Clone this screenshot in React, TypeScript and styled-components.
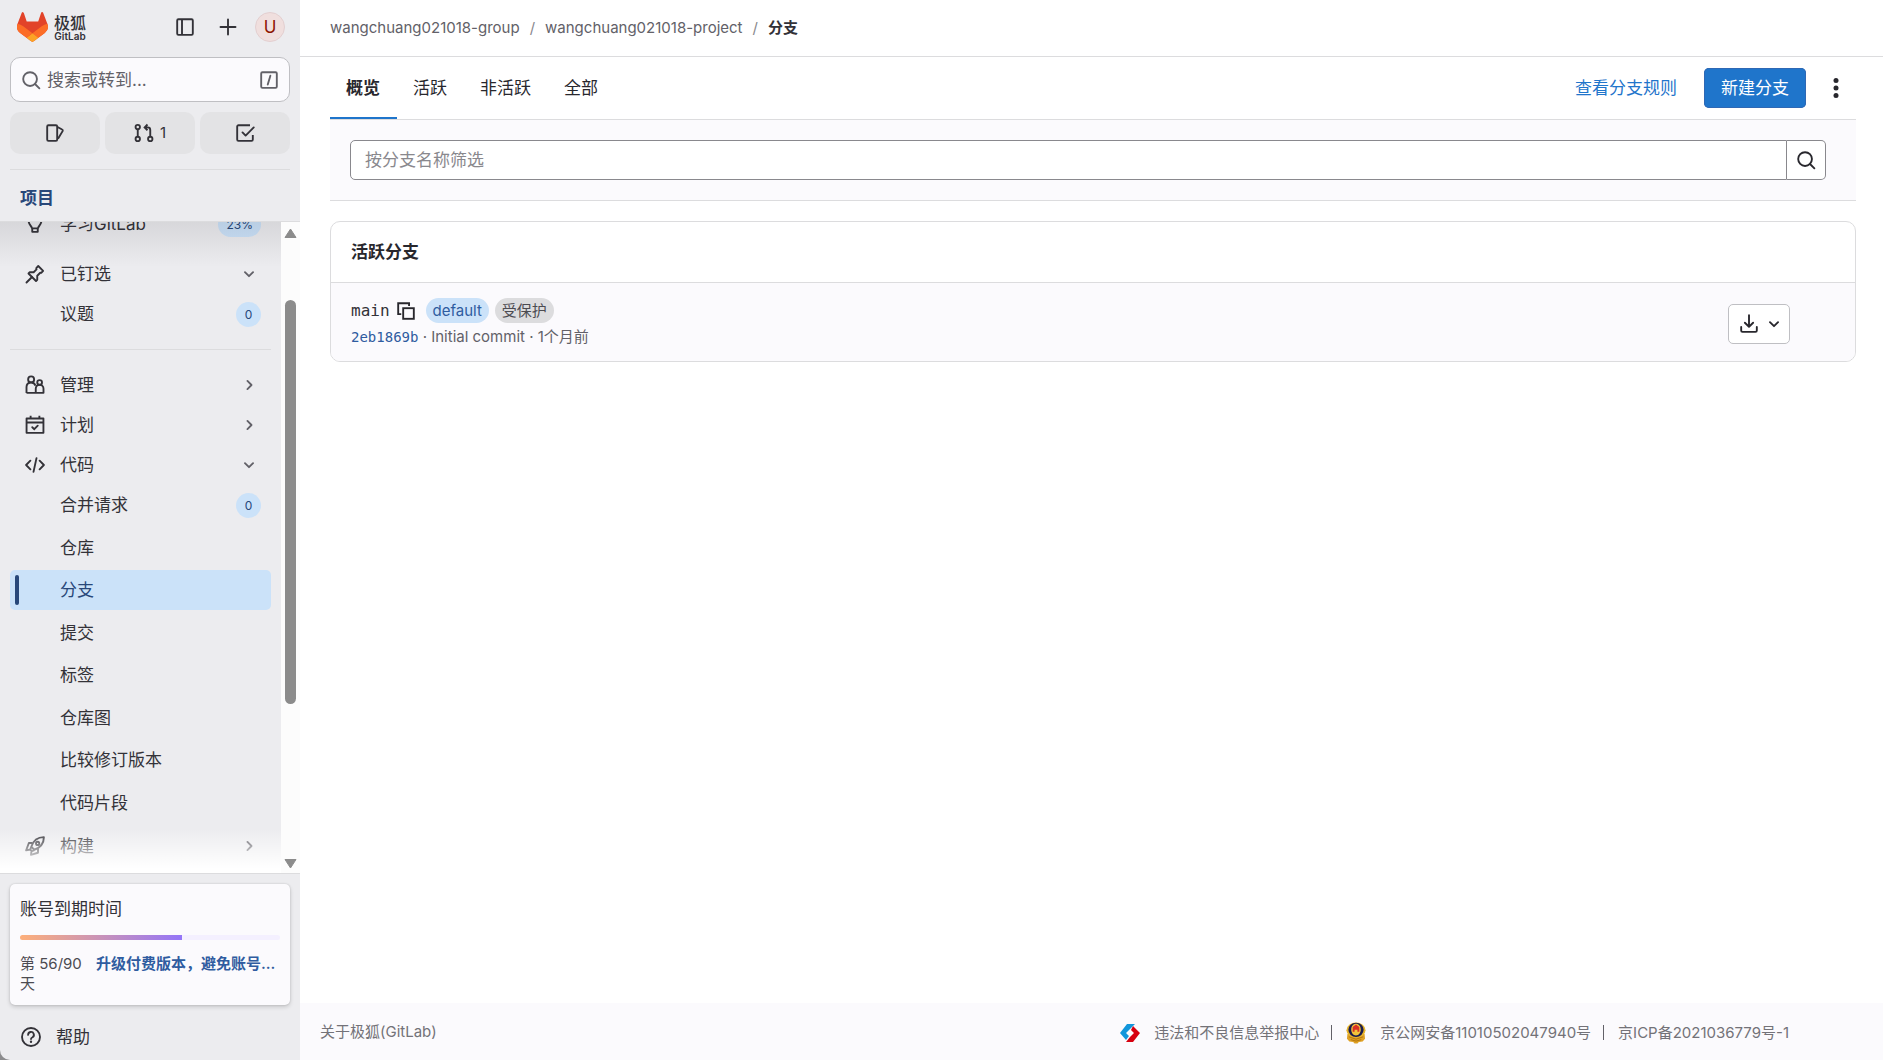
import React from "react";
import styled, { createGlobalStyle, css } from "styled-components";

const GlobalStyle = createGlobalStyle`
  *, *::before, *::after { box-sizing: border-box; }
  body {
    margin: 0;
    background: #8c8c8e;
    color: #28272d;
    font-family: Inter, "Noto Sans CJK SC", sans-serif;
    font-size: 17px;
    line-height: 24px;
  }
  a { color: inherit; text-decoration: none; }
  button, input { font: inherit; color: inherit; }
  button { padding: 0; border: 0; background: none; cursor: pointer; }
  ul, ol { margin: 0; padding: 0; list-style: none; }
  h1, h2, p { margin: 0; font-size: inherit; }
`;

/* ---------- icons ---------- */

const Glyph = styled.svg`
  width: 20px;
  height: 20px;
  flex: none;
  display: block;
  fill: none;
  stroke: currentColor;
  stroke-width: 1.5;
`;

const shapes: Record<string, React.ReactNode> = {
  sidebar: (
    <>
      <rect x="1.75" y="1.75" width="12.5" height="12.5" rx="1" />
      <path d="M5.6 2v12" />
    </>
  ),
  plus: <path d="M8 2v12M2 8h12" strokeLinecap="round" />,
  search: (
    <>
      <circle cx="7.25" cy="7.25" r="5.5" />
      <path d="M11.2 11.2l3.5 3.5" strokeLinecap="round" />
    </>
  ),
  slash: (
    <>
      <rect x="1.75" y="1.75" width="12.5" height="12.5" rx="1" />
      <path d="M9.1 4.6L7 11.6" strokeLinecap="round" />
    </>
  ),
  issues: (
    <>
      <rect x="1.75" y="1.75" width="8" height="12.5" rx="1" />
      <path d="M10 3.2l3.7 2a.9.9 0 0 1 .5 1.1L10.4 12.6" strokeLinejoin="round" />
    </>
  ),
  merge: (
    <>
      <circle cx="3" cy="3.25" r="1.75" />
      <circle cx="3" cy="12.75" r="1.75" />
      <circle cx="13" cy="12.75" r="1.75" />
      <path d="M3 5v6M13 11V5.5a2 2 0 0 0-2-2H8.8M10.8 1.2L8.5 3.5l2.3 2.3" />
    </>
  ),
  todo: (
    <>
      <path d="M12 1.75H2.75a1 1 0 0 0-1 1v10.5a1 1 0 0 0 1 1h10.5a1 1 0 0 0 1-1V9.5" />
      <path d="M6 7.5l2.5 2.6 6.5-6.6" strokeLinecap="round" strokeLinejoin="round" />
    </>
  ),
  bulb: (
    <>
      <path d="M5.7 11.5C5.3 9.5 2.9 8.4 2.9 5.6a5.1 5.1 0 0 1 10.2 0c0 2.8-2.4 3.9-2.8 5.9z" strokeLinejoin="round" />
      <path d="M5.8 11.5v2.75h4.4V11.5" strokeLinejoin="round" />
    </>
  ),
  pin: (
    <>
      <path d="M10.6 1.6l3.9 3.9-1.5 1.6-.8-.1-2.4 2.4v3.2l-1 1-6-6 1-1h3.1l2.3-2.3-.2-1z" strokeLinejoin="round" />
      <path d="M5.6 10.4L1.2 14.8" strokeLinecap="round" />
    </>
  ),
  users: (
    <>
      <circle cx="4.9" cy="3.5" r="2.4" />
      <path d="M1.2 14.3V9.6a3.7 3.7 0 0 1 7.2-1.100M1.200 14.250H8.600V10.900a3.100 3.100 0 0 1 6.200 0v3.350H8.600" strokeLinejoin="round" />
      <circle cx="11.700" cy="6" r="1.900" />
    </>
  ),
  calendar: (
    <>
      <path d="M1.25 2.75h13.5v11.5H1.25zM1.25 6h13.5M4.5 0.5v2.2M11.5 0.5v2.2" strokeLinejoin="round" />
      <path d="M5.8 9.8l1.6 1.5 2.8-2.8" strokeLinecap="round" />
    </>
  ),
  code: <path d="M4.3 4.5L.9 8l3.4 3.5M11.7 4.5L15.1 8l-3.4 3.5M9.2 2.5L6.8 13.5" strokeLinecap="round" strokeLinejoin="round" />,
  rocket: (
    <>
      <path d="M5 8.6C6.4 4.4 9.6 .9 15.1 .9c0 5.3-3.5 8.6-7.7 10.1z" strokeLinejoin="round" />
      <circle cx="10.1" cy="5.9" r="1.3" />
      <path d="M6 5.6H3.1L.9 11.5l3.5-.7M10.4 10v3.4l-5.6 1.7 .4-3.5M4.8 9l-.6 2 1.3 1.2 2-.8" strokeLinejoin="round" />
    </>
  ),
  question: (
    <>
      <circle cx="8" cy="8" r="7.2" />
      <path d="M5.7 6.3a2.3 2.3 0 1 1 3.5 1.9C8.4 8.6 8 8.9 8 9.6" strokeLinecap="round" />
      <circle cx="8" cy="11.8" r=".95" fill="currentColor" stroke="none" />
    </>
  ),
  copy: (
    <>
      <path d="M4.2 10.5H1.75V1.75h8.7V4" />
      <rect x="5.75" y="5.75" width="8.5" height="8.5" />
    </>
  ),
  download: (
    <>
      <path d="M8 1v9M4.7 7L8 10.2 11.3 7" strokeLinecap="round" strokeLinejoin="round" />
      <path d="M1.75 10.3v2.95a1 1 0 0 0 1 1h10.5a1 1 0 0 0 1-1V10.3" strokeLinecap="round" />
    </>
  ),
  more: (
    <g fill="currentColor" stroke="none">
      <circle cx="8" cy="2" r="2" />
      <circle cx="8" cy="8" r="2" />
      <circle cx="8" cy="14" r="2" />
    </g>
  ),
  down: <path d="M4.75 6.5L8 9.75l3.25-3.25" strokeLinecap="round" strokeLinejoin="round" />,
  right: <path d="M6.75 4.75L10 8l-3.25 3.25" strokeLinecap="round" strokeLinejoin="round" />,
};

function Icon({ name }: { name: string }) {
  return (
    <Glyph viewBox="0 0 16 16" aria-hidden="true">
      {shapes[name]}
    </Glyph>
  );
}

const Tanuki = () => (
  <svg width="31" height="30" viewBox="0 0 25 24" aria-hidden="true">
    <path d="m24.507 9.5-.034-.09L21.082.562a.896.896 0 0 0-1.694.091l-2.29 7.01H7.825L5.535.653a.898.898 0 0 0-1.694-.09L.451 9.411.416 9.5a6.297 6.297 0 0 0 2.09 7.278l.012.01.03.022 5.16 3.867 2.56 1.935 1.554 1.176a1.051 1.051 0 0 0 1.268 0l1.555-1.176 2.56-1.935 5.197-3.89.014-.01A6.297 6.297 0 0 0 24.507 9.5Z" fill="#E24329" />
    <path d="m24.507 9.5-.034-.09a11.44 11.44 0 0 0-4.56 2.051l-7.447 5.632 4.742 3.584 5.197-3.89.014-.01A6.297 6.297 0 0 0 24.507 9.5Z" fill="#FC6D26" />
    <path d="m7.707 20.677 2.56 1.935 1.555 1.176a1.051 1.051 0 0 0 1.268 0l1.555-1.176 2.56-1.935-4.743-3.584-4.755 3.584Z" fill="#FCA326" />
    <path d="M5.01 11.461a11.43 11.43 0 0 0-4.56-2.05L.416 9.5a6.297 6.297 0 0 0 2.09 7.278l.012.01.03.022 5.16 3.867 4.745-3.584-7.444-5.632Z" fill="#FC6D26" />
  </svg>
);

const ReportMark = () => (
  <svg width="20" height="18" viewBox="0 0 20 18" aria-hidden="true">
    <path d="M7 0h8l-4 4-5 5 3 3-3 4L0 9z" fill="#1296db" />
    <path d="M13 2l7 7-7 9H6l4-5 4-4-3-3z" fill="#d7000f" />
  </svg>
);

const PoliceMark = () => (
  <svg width="20" height="22" viewBox="0 0 21 22" aria-hidden="true">
    <path d="M1.500 12h18l.5 5-2.500 3-4 .5-1.500 1.500h-3l-1.500-1.500-4-.5L1 17z" fill="#dfa126" />
    <ellipse cx="10.5" cy="8" rx="10" ry="8" fill="#e8b52c" />
    <ellipse cx="10.5" cy="7.7" rx="8" ry="7.5" fill="#1b1c4e" />
    <path d="M10.5 1.200c3 0 5 2.500 5 6.300 0 3-2 6-5 6s-5-3-5-6c0-3.800 2-6.300 5-6.300z" fill="#f2c33b" />
    <path d="M10.5 2.200l3.500 2.500v5h-2V7.500H9v2.200H7v-5z" fill="#d93025" />
    <path d="M3 15l7.500 2.500L18 15M5 18l5.500 1.500L16 18" stroke="#b3740d" fill="none" />
  </svg>
);

/* ---------- sidebar ---------- */

const Shell = styled.div`
  display: flex;
  min-height: 100vh;
`;

const Sidebar = styled.aside`
  width: 300px;
  height: 100vh;
  flex: none;
  position: sticky;
  top: 0;
  display: flex;
  flex-direction: column;
  background: #ececef;
  color: #333238;
  border-bottom-left-radius: 10px;
  overflow: hidden;
`;

const SidebarTop = styled.div`
  padding: 0 10px;
  border-bottom: 1px solid #dcdcde;
`;

const BrandRow = styled.div`
  display: flex;
  align-items: center;
  height: 54px;
  padding: 0 5px 0 7px;
`;

const Brand = styled.a`
  display: flex;
  align-items: center;
  gap: 6px;
  margin-right: auto;
`;

const BrandText = styled.span`
  display: flex;
  flex-direction: column;
  align-items: center;
  padding-top: 2px;
  font-size: 16px;
  font-weight: 500;
  line-height: 16px;
`;

const BrandSub = styled.span`
  font-size: 10px;
  font-weight: 600;
  line-height: 10px;
`;

const HeadButton = styled.button`
  display: grid;
  place-items: center;
  width: 43px;
  height: 40px;
`;

const Avatar = styled.span`
  display: grid;
  place-items: center;
  width: 30px;
  height: 30px;
  border: 1px solid #e3cfd0;
  border-radius: 50%;
  background: #f0dfde;
  color: #8d1300;
`;

const AvatarButton = styled.button`
  margin-left: 6px;
  border-radius: 50%;
`;

const SearchButton = styled.button`
  display: flex;
  align-items: center;
  gap: 6px;
  width: 100%;
  height: 45px;
  margin-top: 3px;
  padding: 0 10px;
  border: 1px solid #bfbfc3;
  border-radius: 10px;
  background: #fbfafd;
  color: #626168;
  text-align: left;
`;

const Grow = styled.span`
  flex: 1;
`;

const Shortcuts = styled.div`
  display: grid;
  grid-template-columns: repeat(3, 1fr);
  gap: 5px;
  padding: 10px 0 15px;
  border-bottom: 1px solid #dcdcde;
`;

const Shortcut = styled.a`
  display: flex;
  align-items: center;
  justify-content: center;
  gap: 6px;
  height: 42px;
  border-radius: 10px;
  background: #e3e3e5;
  font-size: 15px;
`;

const SectionTitle = styled.h2`
  padding: 16px 10px 11px;
  color: #284779;
  font-weight: 600;
`;

const Scroller = styled.div`
  flex: 1;
  min-height: 0;
  display: flex;
`;

const NavPane = styled.nav`
  position: relative;
  flex: 1;
  overflow: hidden;
  padding: 0 10px;

  &::before, &::after {
    content: "";
    position: absolute;
    left: 0;
    right: 0;
    pointer-events: none;
  }
  &::before {
    top: 0;
    height: 45px;
    background: linear-gradient(rgba(31, 30, 36, 0.1), rgba(31, 30, 36, 0));
  }
  &::after {
    bottom: 0;
    height: 44px;
    background: linear-gradient(rgba(255, 255, 255, 0), #fff 90%);
  }
`;

const NavScrolled = styled.div`
  margin-top: -18px;
`;

const Group = styled.ul<{ $divided?: boolean }>`
  padding-top: ${(p) => (p.$divided ? 15 : 10)}px;
  margin-top: ${(p) => (p.$divided ? 15 : 0)}px;
  border-top: ${(p) => (p.$divided ? "1px solid #dcdcde" : "0")};
`;

const SubList = styled.ul`
  display: grid;
  align-content: space-between;
  height: 338px;
  margin-bottom: 3px;
`;

const NavLink = styled.a<{ $active?: boolean }>`
  display: flex;
  align-items: center;
  height: 40px;
  padding: 0 10px 0 5px;
  border-radius: 5px;
  ${(p) =>
    p.$active &&
    css`
      background: #cbe2f9;
      color: #284779;
    `}
`;

const Marker = styled.span<{ $active?: boolean }>`
  width: 4px;
  height: 30px;
  margin-right: 6px;
  border-radius: 2px;
  background: ${(p) => (p.$active ? "#284779" : "transparent")};
`;

const IconSlot = styled.span`
  width: 20px;
  margin-right: 15px;
`;

const Chevron = styled.span`
  padding-right: 2px;
  color: #626168;
`;

const Count = styled.span`
  min-width: 25px;
  padding: 0 8px;
  border-radius: 13px;
  background: #cbe2f9;
  color: #284779;
  font-size: 12px;
  line-height: 25px;
  text-align: center;
`;

const ScrollTrack = styled.div`
  display: flex;
  flex-direction: column;
  align-items: center;
  width: 19px;
  padding: 6px 0 4px;
  background: #fcfcfc;
`;

const ScrollThumb = styled.div`
  width: 11px;
  flex: 405;
  border-radius: 6px;
  background: #8b8b8b;
`;

const ScrollSpace = styled.div<{ $share: number }>`
  flex: ${(p) => p.$share};
`;

const SidebarBottom = styled.div`
  padding: 10px 10px 3px;
  border-top: 1px solid #dcdcde;
`;

const Trial = styled.section`
  padding: 13px 10px 11px;
  border-radius: 5px;
  background: #fbfafd;
  box-shadow: 0 0 2px rgba(5, 5, 6, 0.16), 0 2px 4px rgba(5, 5, 6, 0.16);
`;

const Meter = styled.div`
  height: 5px;
  margin: 14px 0;
  border-radius: 3px;
  background: #f4f0ff;
  overflow: hidden;
`;

const MeterFill = styled.div`
  height: 100%;
  background: linear-gradient(to right, #fdaf7a, #9475f8);
`;

const TrialRow = styled.div`
  display: flex;
  gap: 10px;
  font-size: 15px;
  line-height: 20px;
  color: #4c4b51;
`;

const TrialDays = styled.span`
  width: 66px;
`;

const TrialLink = styled.a`
  flex: 1;
  color: #2f5ca0;
  font-weight: 600;
  white-space: nowrap;
`;

const HelpButton = styled.button`
  display: flex;
  align-items: center;
  gap: 15px;
  height: 40px;
  margin-top: 12px;
  padding: 0 11px;
`;

/* ---------- main ---------- */

const Main = styled.div`
  flex: 1;
  min-width: 0;
  display: flex;
  flex-direction: column;
  background: #fff;
`;

const TopBar = styled.header`
  display: flex;
  align-items: center;
  height: 57px;
  padding: 0 30px;
  border-bottom: 1px solid #dcdcde;
`;

const Crumbs = styled.ol`
  display: flex;
  font-size: 15px;
  line-height: 20px;
  color: #626168;

  li + li::before {
    content: "/";
    margin: 0 10px;
    color: #89888d;
  }
  li:last-child a {
    color: #333238;
    font-weight: 600;
  }
`;

const Content = styled.main`
  flex: 1;
  padding: 0 27px 0 30px;
`;

const TabBar = styled.div`
  display: flex;
  align-items: center;
  height: 63px;
  border-bottom: 1px solid #dcdcde;
`;

const Tabs = styled.nav`
  display: flex;
  align-self: stretch;
  margin-right: auto;
`;

const Tab = styled.a<{ $active?: boolean }>`
  display: flex;
  align-items: center;
  padding: 2px 17px 0 16px;
  border-bottom: 2px solid ${(p) => (p.$active ? "#1f75cb" : "transparent")};
  font-weight: ${(p) => (p.$active ? 600 : 400)};
`;

const RulesLink = styled.a`
  color: #1f75cb;
  margin-right: 27px;
`;

const PrimaryButton = styled.button`
  height: 40px;
  padding: 0 17px;
  border-radius: 5px;
  background: #1f75cb;
  box-shadow: inset 0 0 0 1px #2f68b4;
  color: #fff;
`;

const MoreButton = styled.button`
  display: grid;
  place-items: center;
  width: 40px;
  height: 40px;
  margin-left: 10px;
`;

const FilterArea = styled.form`
  display: flex;
  padding: 20px 30px 20px 20px;
  border-bottom: 1px solid #dcdcde;
  background: #fbfafd;
`;

const FilterInput = styled.input`
  flex: 1;
  min-width: 0;
  height: 40px;
  padding: 0 14px;
  border: 1px solid #89888d;
  border-radius: 5px 0 0 5px;
  background: #fff;
  outline: 0;
  &::placeholder {
    color: #89888d;
    opacity: 1;
  }
`;

const FilterButton = styled.button`
  display: grid;
  place-items: center;
  width: 39px;
  height: 40px;
  border: 1px solid #89888d;
  border-left: 0;
  border-radius: 0 5px 5px 0;
  background: #fff;
`;

const Card = styled.section`
  margin-top: 20px;
  border: 1px solid #dcdcde;
  border-radius: 10px;
  overflow: hidden;
`;

const CardTitle = styled.h1`
  padding: 18px 20px;
  border-bottom: 1px solid #dcdcde;
  font-weight: 600;
`;

const BranchRow = styled.div`
  display: flex;
  align-items: center;
  justify-content: space-between;
  padding: 15px 65px 12px 20px;
  background: #fbfafd;
`;

const BranchName = styled.div`
  display: flex;
  align-items: center;
  gap: 6px;
`;

const Mono = styled.a<{ $small?: boolean }>`
  font-family: "DejaVu Sans Mono", monospace;
  font-size: ${(p) => (p.$small ? 14 : 16)}px;
  color: ${(p) => (p.$small ? "#2f5ca0" : "#333238")};
`;

const CopyButton = styled.button`
  margin-right: 4px;
`;

const Tag = styled.span<{ $tone: "info" | "muted" }>`
  padding: 0 7px;
  border-radius: 13px;
  font-size: 15px;
  line-height: 25px;
  background: ${(p) => (p.$tone === "info" ? "#cbe2f9" : "#dcdcde")};
  color: ${(p) => (p.$tone === "info" ? "#2f5ca0" : "#4c4b51")};
`;

const CommitLine = styled.p`
  padding-top: 2px;
  font-size: 15px;
  color: #626168;
`;

const DownloadButton = styled.button`
  display: flex;
  align-items: center;
  justify-content: space-between;
  width: 62px;
  height: 40px;
  padding: 0 5px 0 10px;
  border: 1px solid #bfbfc3;
  border-radius: 5px;
  background: #fff;
`;

const Footer = styled.footer`
  display: flex;
  align-items: center;
  justify-content: space-between;
  height: 57px;
  padding: 0 94px 0 20px;
  background: #fbfafd;
  color: #737278;
  font-size: 15px;
`;

const Legal = styled.div`
  display: flex;
  align-items: center;
  padding-top: 2px;
`;

const LegalItem = styled.a`
  display: flex;
  align-items: center;
  gap: 14px;
  & + & {
    margin-left: 12px;
  }
  & + &::before {
    content: "";
    width: 1px;
    height: 15px;
    background: #626168;
  }
`;

type Item = { label: string; icon?: string; badge?: string; chevron?: "down" | "right"; active?: boolean };

function NavItem({ label, icon, badge, chevron, active }: Item) {
  return (
    <li>
      <NavLink href="#" $active={active} aria-current={active ? "page" : undefined}>
        <Marker $active={active} />
        <IconSlot>{icon && <Icon name={icon} />}</IconSlot>
        <Grow>{label}</Grow>
        {badge && <Count>{badge}</Count>}
        {chevron && (
          <Chevron>
            <Icon name={chevron} />
          </Chevron>
        )}
      </NavLink>
    </li>
  );
}

const codeItems: Item[] = [
  { label: "合并请求", badge: "0" },
  { label: "仓库" },
  { label: "分支", active: true },
  { label: "提交" },
  { label: "标签" },
  { label: "仓库图" },
  { label: "比较修订版本" },
  { label: "代码片段" },
];

const tabs = ["概览", "活跃", "非活跃", "全部"];

export default function App() {
  const usedDays = 56;
  const totalDays = 90;
  return (
    <Shell>
      <GlobalStyle />
      <Sidebar>
        <SidebarTop>
          <BrandRow>
            <Brand href="#">
              <Tanuki />
              <BrandText>
                极狐<BrandSub>GitLab</BrandSub>
              </BrandText>
            </Brand>
            <HeadButton aria-label="侧边栏">
              <Icon name="sidebar" />
            </HeadButton>
            <HeadButton aria-label="新建">
              <Icon name="plus" />
            </HeadButton>
            <AvatarButton>
              <Avatar>U</Avatar>
            </AvatarButton>
          </BrandRow>
          <SearchButton>
            <Icon name="search" />
            <Grow>搜索或转到...</Grow>
            <Icon name="slash" />
          </SearchButton>
          <Shortcuts>
            <Shortcut href="#" aria-label="议题">
              <Icon name="issues" />
            </Shortcut>
            <Shortcut href="#">
              <Icon name="merge" />1
            </Shortcut>
            <Shortcut href="#" aria-label="待办">
              <Icon name="todo" />
            </Shortcut>
          </Shortcuts>
          <SectionTitle>项目</SectionTitle>
        </SidebarTop>

        <Scroller>
          <NavPane>
            <NavScrolled>
              <ul>
                <NavItem label="学习GitLab" icon="bulb" badge="23%" />
              </ul>
              <Group>
                <NavItem label="已钉选" icon="pin" chevron="down" />
                <NavItem label="议题" badge="0" />
              </Group>
              <Group $divided>
                <NavItem label="管理" icon="users" chevron="right" />
                <NavItem label="计划" icon="calendar" chevron="right" />
                <NavItem label="代码" icon="code" chevron="down" />
                <li>
                  <SubList>
                    {codeItems.map((item) => (
                      <NavItem key={item.label} {...item} />
                    ))}
                  </SubList>
                </li>
                <NavItem label="构建" icon="rocket" chevron="right" />
              </Group>
            </NavScrolled>
          </NavPane>
          <ScrollTrack aria-hidden="true">
            <svg width="13" height="11" viewBox="0 0 13 11">
              <path d="M6.5 1L12 9.5H1z" fill="#8b8b8b" stroke="#8b8b8b" strokeLinejoin="round" />
            </svg>
            <ScrollSpace $share={61} />
            <ScrollThumb />
            <ScrollSpace $share={154} />
            <svg width="13" height="11" viewBox="0 0 13 11">
              <path d="M6.5 10L12 1.5H1z" fill="#8b8b8b" stroke="#8b8b8b" strokeLinejoin="round" />
            </svg>
          </ScrollTrack>
        </Scroller>

        <SidebarBottom>
          <Trial>
            <p>账号到期时间</p>
            <Meter>
              <MeterFill style={{ width: `${(usedDays / totalDays) * 100}%` }} />
            </Meter>
            <TrialRow>
              <TrialDays>
                第 {usedDays}/{totalDays} 天
              </TrialDays>
              <TrialLink href="#">升级付费版本，避免账号...</TrialLink>
            </TrialRow>
          </Trial>
          <HelpButton>
            <Icon name="question" />
            帮助
          </HelpButton>
        </SidebarBottom>
      </Sidebar>

      <Main>
        <TopBar>
          <Crumbs>
            <li>
              <a href="#">wangchuang021018-group</a>
            </li>
            <li>
              <a href="#">wangchuang021018-project</a>
            </li>
            <li>
              <a href="#">分支</a>
            </li>
          </Crumbs>
        </TopBar>
        <Content>
          <TabBar>
            <Tabs>
              {tabs.map((t, i) => (
                <Tab key={t} href="#" $active={i === 0}>
                  {t}
                </Tab>
              ))}
            </Tabs>
            <RulesLink href="#">查看分支规则</RulesLink>
            <PrimaryButton>新建分支</PrimaryButton>
            <MoreButton aria-label="更多">
              <Icon name="more" />
            </MoreButton>
          </TabBar>
          <FilterArea onSubmit={(e) => e.preventDefault()}>
            <FilterInput type="text" placeholder="按分支名称筛选" aria-label="按分支名称筛选" />
            <FilterButton aria-label="搜索">
              <Icon name="search" />
            </FilterButton>
          </FilterArea>
          <Card>
            <CardTitle>活跃分支</CardTitle>
            <BranchRow>
              <div>
                <BranchName>
                  <Mono href="#">main</Mono>
                  <CopyButton aria-label="复制">
                    <Icon name="copy" />
                  </CopyButton>
                  <Tag $tone="info">default</Tag>
                  <Tag $tone="muted">受保护</Tag>
                </BranchName>
                <CommitLine>
                  <Mono href="#" $small>
                    2eb1869b
                  </Mono>{" "}
                  · Initial commit · 1个月前
                </CommitLine>
              </div>
              <DownloadButton aria-label="下载">
                <Icon name="download" />
                <Icon name="down" />
              </DownloadButton>
            </BranchRow>
          </Card>
        </Content>
        <Footer>
          <a href="#">关于极狐(GitLab)</a>
          <Legal>
            <LegalItem href="#">
              <ReportMark />
              违法和不良信息举报中心
            </LegalItem>
            <LegalItem href="#">
              <PoliceMark />
              京公网安备11010502047940号
            </LegalItem>
            <LegalItem href="#">京ICP备2021036779号-1</LegalItem>
          </Legal>
        </Footer>
      </Main>
    </Shell>
  );
}
